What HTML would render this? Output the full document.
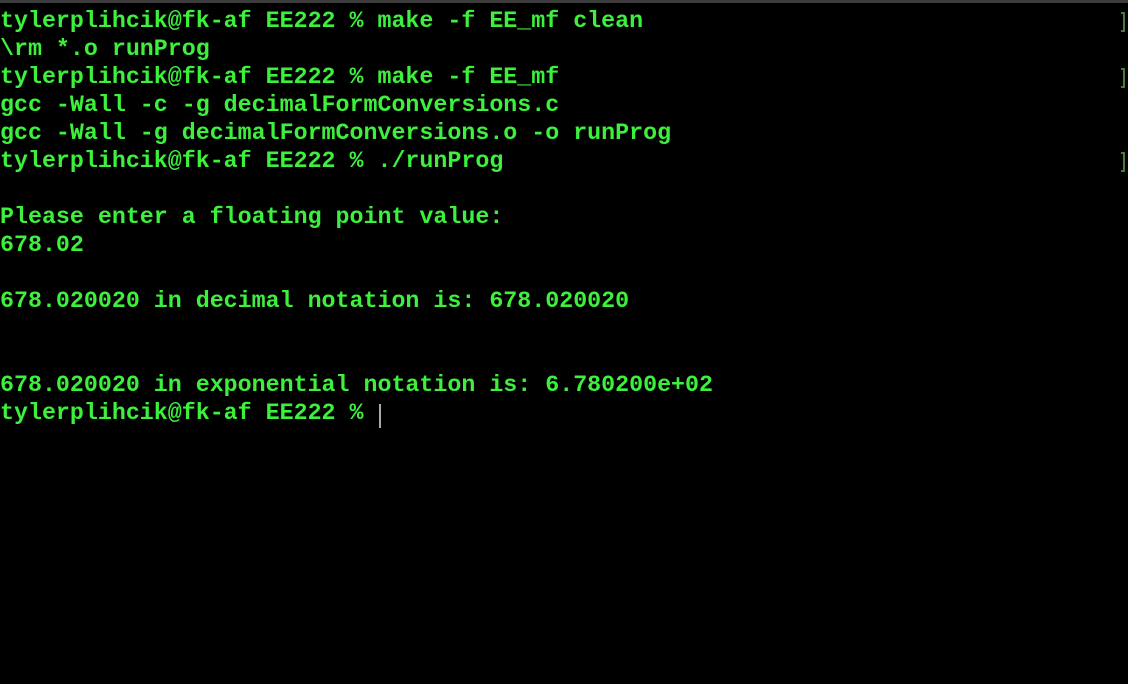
<!DOCTYPE html>
<html><head><style>
html,body{margin:0;padding:0;background:#000;width:1128px;height:684px;overflow:hidden}
.bar{position:absolute;top:0;left:0;width:1128px;height:3px;background:#3c3c3c}
pre{position:absolute;top:7px;left:0;margin:0;font-family:"Liberation Mono",monospace;font-size:23.3px;line-height:28px;color:#3cf03c;font-weight:bold;letter-spacing:0}
.b{position:absolute;left:1121px;width:4px;height:20px;border:2px solid #4a7a3a;border-left:none;box-sizing:border-box}
.cur{position:absolute;left:379px;top:404px;width:2px;height:24px;background:#aaa}
</style></head><body>
<div class="bar"></div>
<pre>tylerplihcik@fk-af EE222 % make -f EE_mf clean
\rm *.o runProg
tylerplihcik@fk-af EE222 % make -f EE_mf
gcc -Wall -c -g decimalFormConversions.c
gcc -Wall -g decimalFormConversions.o -o runProg
tylerplihcik@fk-af EE222 % ./runProg

Please enter a floating point value:
678.02

678.020020 in decimal notation is: 678.020020


678.020020 in exponential notation is: 6.780200e+02
tylerplihcik@fk-af EE222 % </pre>
<div class="b" style="top:12px"></div>
<div class="b" style="top:68px"></div>
<div class="b" style="top:152px"></div>
<div class="cur"></div>
</body></html>
